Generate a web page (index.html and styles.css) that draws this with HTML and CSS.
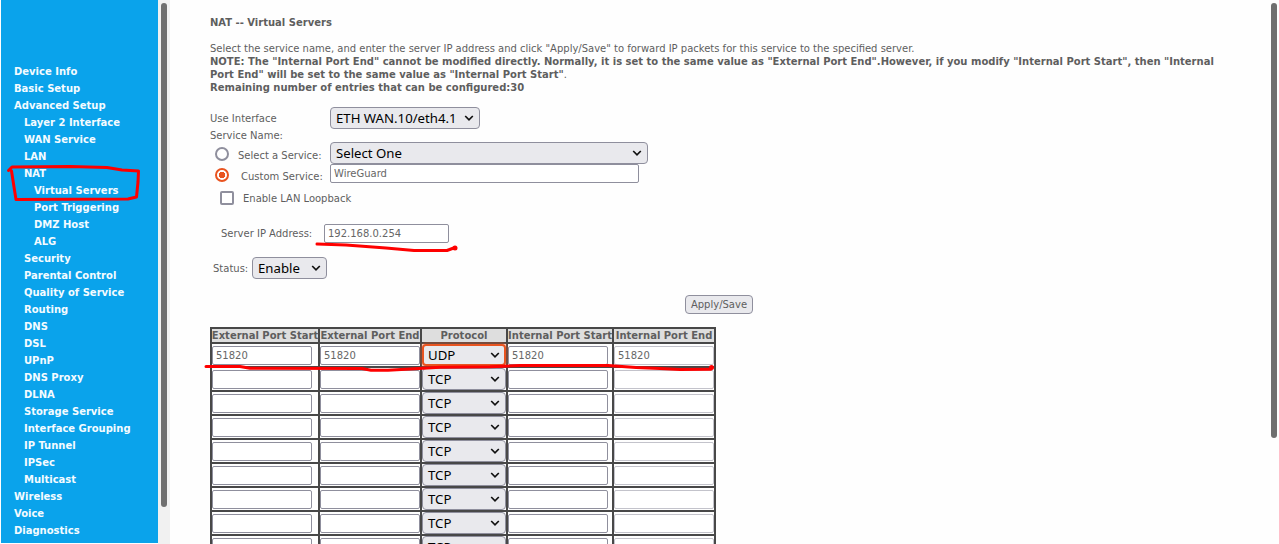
FILE: index.html
```
<!DOCTYPE html>
<html lang="en">
<head>
<meta charset="utf-8">
<title>NAT -- Virtual Servers</title>
<link rel="stylesheet" href="styles.css">
<script src="table.js" defer></script>
</head>
<body>
<svg class="defs" width="0" height="0"><symbol id="chev" viewBox="0 0 10 8"><path d="M1.2 2 L5 5.8 L8.8 2" fill="none" stroke="#111" stroke-width="1.7"/></symbol></svg>
<div class="page">
<nav class="side">
<a>Device Info</a><a>Basic Setup</a><a>Advanced Setup</a>
<a class="l2">Layer 2 Interface</a><a class="l2">WAN Service</a><a class="l2">LAN</a><a class="l2">NAT</a>
<a class="l3">Virtual Servers</a><a class="l3">Port Triggering</a><a class="l3">DMZ Host</a><a class="l3">ALG</a>
<a class="l2">Security</a><a class="l2">Parental Control</a><a class="l2">Quality of Service</a><a class="l2">Routing</a><a class="l2">DNS</a><a class="l2">DSL</a><a class="l2">UPnP</a><a class="l2">DNS Proxy</a><a class="l2">DLNA</a><a class="l2">Storage Service</a><a class="l2">Interface Grouping</a><a class="l2">IP Tunnel</a><a class="l2">IPSec</a><a class="l2">Multicast</a>
<a>Wireless</a><a>Voice</a><a>Diagnostics</a>
</nav>
<div class="track"><div class="thumb side-thumb"></div></div>
<main class="main">
<div class="intro">
<b>NAT -- Virtual Servers</b><br><br>
Select the service name, and enter the server IP address and click "Apply/Save" to forward IP packets for this service to the specified server.<br>
<b>NOTE: The "Internal Port End" cannot be modified directly. Normally, it is set to the same value as "External Port End".However, if you modify "Internal Port Start", then "Internal<br>Port End" will be set to the same value as "Internal Port Start"</b>.<br>
<b>Remaining number of entries that can be configured:30</b>
</div>
<div class="row use"><span class="lab">Use Interface</span><div class="select eth"><span>ETH WAN.10/eth4.1</span><svg><use href="#chev"/></svg></div></div>
<div class="row name">Service Name:</div>
<div class="row svc"><i class="radio"></i><span class="svc-lab">Select a Service:</span><div class="select one"><span>Select One</span><svg><use href="#chev"/></svg></div></div>
<div class="row custom"><i class="radio on"></i><span class="custom-lab">Custom Service:</span><input class="field wire" value="WireGuard"></div>
<div class="row loop"><i class="check"></i><span>Enable LAN Loopback</span></div>
<div class="row ip"><span class="ip-lab">Server IP Address:</span><input class="field addr" value="192.168.0.254"></div>
<div class="row status"><span class="st-lab">Status:</span><div class="select enable"><span>Enable</span><svg><use href="#chev"/></svg></div></div>
<div class="row apply"><button class="btn">Apply/Save</button></div>
<div class="ports" id="ports">
<div class="th"><span>External Port Start</span></div><div class="th"><span>External Port End</span></div><div class="th"><span>Protocol</span></div><div class="th"><span>Internal Port Start</span></div><div class="th"><span>Internal Port End</span></div>
</div>
</main>
<div class="right"><div class="thumb main-thumb"></div></div>
</div>
<svg class="marks" viewBox="0 0 1279 544">
<path d="M8.500 170.500 L12 167 L70 166.500 L107 167.500 L122 170 L138.500 171 L138 182 L136.500 197 L128 199 L16 199.500 L14 187 L11.500 171"/>
<path d="M317 244 L346 245 L386 248 L414 250.500 L447 250.500 L455 247.500"/><circle cx="455" cy="248" r="2.500"/>
<path d="M206 366.500 L240 366.500 L250 368.300 L362 368.500 L371 370.300 L388 370.300 L410 369 L440 367.300 L490 366.800 L520 365.500 L608 365.500 L636 367.500 L660 368.500 L680 369.500 L711 369.300"/><circle cx="711.500" cy="367.500" r="2.500"/>
</svg>
</body>
</html>
```
FILE: table.js
```
const ports = document.getElementById('ports');
for (let r = 0; r < 9; r++) {
  const v = r === 0 ? '51820' : '';
  for (let c = 0; c < 5; c++) {
    const cell = document.createElement('div');
    cell.className = 'td';
    cell.innerHTML = c === 2
      ? `<div class="select proto${r === 0 ? ' focus' : ''}"><span>${r === 0 ? 'UDP' : 'TCP'}</span><svg><use href="#chev"/></svg></div>`
      : `<input class="field port${c === 4 ? ' locked' : ''}" value="${v}">`;
    ports.append(cell);
  }
}
```
FILE: styles.css
```
* { box-sizing: border-box; }
body { margin: 0; height: 544px; overflow: hidden; background: #fefefe; color: #5e5e5e; font: 11.11px/13px "DejaVu Sans Condensed", "DejaVu Sans", sans-serif; font-stretch: condensed; }
.defs { position: absolute; }
.page { display: flex; height: 544px; overflow: hidden; }
.side { width: 157px; height: 543px; margin-left: 1px; padding: 63px 0 0 13px; background: #0aa3eb; color: #f4fbff; font-weight: bold; overflow: hidden; flex: none; }
.side a { display: block; height: 17px; line-height: 17px; white-space: nowrap; }
.side .l2 { padding-left: 10px; }
.side .l3 { padding-left: 20px; }
.track { width: 12px; padding: 3px 3px 0; background: #f1f1f1; flex: none; }
.thumb { width: 6px; border-radius: 3px; background: #6f6f6f; }
.side-thumb { height: 504px; }
.main { flex: 1; padding: 16px 0 0 40px; min-width: 0; white-space: nowrap; }
.right { width: 8px; padding-top: 3px; flex: none; }
.main-thumb { height: 435px; }
.row { display: flex; align-items: center; }
.use { height: 22px; margin-top: 13px; }
.lab { width: 120px; }
.name { height: 13px; }
.svc { height: 22px; }
.select { display: flex; align-items: center; justify-content: space-between; height: 22px; padding: 0 5px; border: 1px solid #8f8f9d; border-radius: 4px; background: #e9e9ed; color: #000; font: 13.2px/18px "Noto Sans", sans-serif; font-stretch: normal; }
.select svg { width: 10px; height: 8px; flex: none; }
.eth { width: 150px; }
.one { width: 318px; }
.enable { width: 75px; }
.radio { width: 14px; height: 14px; margin-left: 5px; border: 2px solid #8f8f9d; border-radius: 50%; background: #fff; flex: none; }
.radio.on { border-color: #e95420; background: radial-gradient(circle, #e95420 0 3px, #fff 3.5px); }
.svc .radio { margin-top: 2px; }
.svc-lab { width: 92px; margin-left: 9px; padding-top: 4px; }
.custom { height: 21px; align-items: flex-start; }
.custom .radio { margin-top: 4px; }
.custom-lab { width: 89px; margin-left: 12px; padding-top: 6px; }
.field { height: 19px; margin: 0; padding: 0 3px; border: 1px solid #8f8f9d; border-radius: 2px; background: #fff; color: #666; font: inherit; line-height: 15px; }
.wire { width: 309px; }
.loop { height: 26px; }
.check { width: 14px; height: 14px; margin: 0 9px 1px 10px; border: 2px solid #8f8f9d; border-radius: 2px; background: #fff; }
.ip { height: 19px; margin-top: 13px; }
.ip-lab { width: 103px; margin-left: 11px; }
.addr { width: 125px; }
.status { height: 22px; margin-top: 14px; }
.st-lab { width: 39px; margin-left: 3px; }
.apply { height: 19px; margin: 16px 0 13px 475px; }
.btn { width: 68px; height: 19px; padding: 0; border: 1px solid #8f8f9d; border-radius: 4px; background: #e9e9ed; color: #5e5e5e; font: inherit; line-height: 15px; }
.ports { display: grid; grid-template-columns: 106px 100px 84px 104px 100px; grid-template-rows: 13px; grid-auto-rows: 22px; gap: 2px; width: 506px; padding: 2px; background: #484848; }
.th { display: flex; justify-content: center; background: #dedede; font-weight: bold; line-height: 13px; }
.td { display: flex; align-items: center; background: #fefefe; }
.port { width: 100px; }
.locked { border-color: #c3c3cb; }
.proto { width: 84px; }
.focus { border: 2px solid #e95420; padding: 0 4px; box-shadow: 0 0 0 2px rgba(233, 84, 32, .3); }
.marks { position: absolute; left: 0; top: 0; width: 1279px; height: 544px; fill: none; stroke: #fe0000; stroke-width: 3; stroke-linecap: round; stroke-linejoin: round; pointer-events: none; }
.marks circle { fill: #fe0000; stroke: none; }
```
